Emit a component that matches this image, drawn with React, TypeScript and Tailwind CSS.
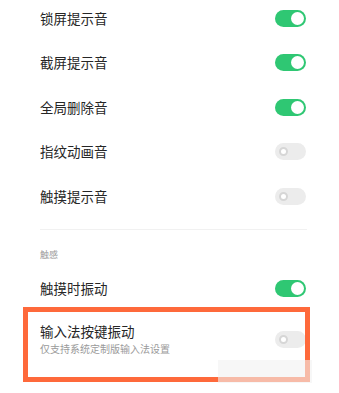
import React from "react";

function Toggle({ on }: { on: boolean }) {
  if (on) {
    return (
      <div className="flex h-[17px] w-[31px] items-center justify-end rounded-full bg-[#2fc773] pr-[2px]">
        <div className="h-[13px] w-[13px] rounded-full bg-white" />
      </div>
    );
  }
  return (
    <div className="flex h-[17px] w-[31px] items-center rounded-full bg-[#ececec] pl-[4px]">
      <div className="h-[9px] w-[9px] rounded-full border-[2px] border-[#d6d6d6] bg-white" />
    </div>
  );
}

function Row({ label, on }: { label: string; on: boolean }) {
  return (
    <div className="flex h-[44.5px] items-center justify-between pl-[40px] pr-[33px]">
      <span className="text-[13.5px] leading-none text-[#262626]">{label}</span>
      <Toggle on={on} />
    </div>
  );
}

export default function App() {
  return (
    <div
      className="relative h-[393px] w-[339px] overflow-hidden bg-white"
      style={{ fontFamily: '"Noto Sans CJK SC", "Noto Sans", sans-serif' }}
    >
      <div className="-mt-[4px] flex flex-col">
        <Row label="锁屏提示音" on={true} />
        <Row label="截屏提示音" on={true} />
        <Row label="全局删除音" on={true} />
        <Row label="指纹动画音" on={false} />
        <Row label="触摸提示音" on={false} />
      </div>
      <div className="ml-[40px] mt-[10.5px] h-px w-[267px] bg-[#f1f1f1]" />
      <div className="flex h-[20px] items-center pl-[40px] mt-[14px]">
        <span className="text-[9px] leading-none text-[#9a9a9a]">触感</span>
      </div>
      <div className="mt-[2.5px]">
        <Row label="触摸时振动" on={true} />
      </div>
      <div className="flex items-center justify-between pl-[40px] pr-[33px] pt-[12px]">
        <div className="flex flex-col">
          <span className="text-[13.5px] leading-[16px] text-[#262626]">输入法按键振动</span>
          <span className="mt-[4px] text-[10px] leading-[12px] text-[#9a9a9a]">仅支持系统定制版输入法设置</span>
        </div>
        <Toggle on={false} />
      </div>
      {/* annotation highlight box */}
      <div className="absolute left-[23px] top-[307px] h-[75px] w-[287px] border-[5px] border-[#fe693b]" />
      {/* faint watermark block */}
      <div className="absolute left-[218px] top-[360px] h-[23px] w-[94px] bg-[rgba(242,242,242,0.6)]" />
    </div>
  );
}
